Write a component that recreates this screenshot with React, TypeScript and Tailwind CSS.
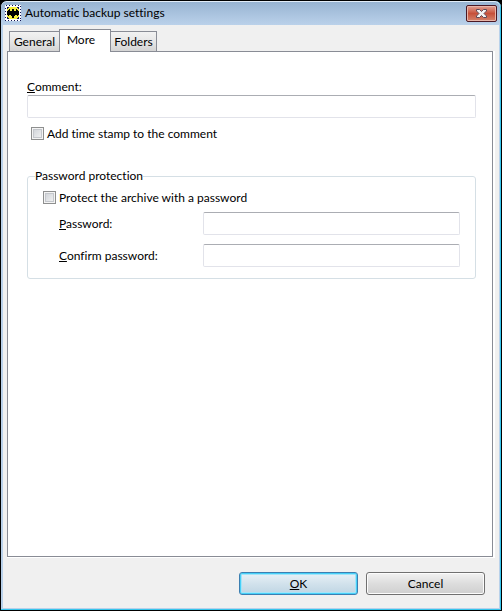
import React, { useState } from "react";

function BatIcon() {
  return (
    <svg width="16" height="16" viewBox="0 0 16 16" shapeRendering="crispEdges" aria-hidden="true">
      <rect width="16" height="16" fill="#fff" />
      <rect x="0.5" y="0.5" width="15" height="15" fill="none" stroke="#101050" strokeDasharray="1 2" />
      <rect x="2" y="2" width="12" height="12" fill="#15155c" />
      <path d="M4 2h8v1h1v1h1v8h-1v1h-1v1H4v-1H3v-1H2V4h1V3h1z" fill="#f4ee3c" />
      <path
        d="M2 6h1V5h1V4h1v2h2V4h2v2h2V4h1v1h1v1h1v4h-1v1h-1v-1h-2v1H9v2H7v-2H6v-1H4v1H3v-1H2z"
        fill="#000"
      />
    </svg>
  );
}

function CloseIcon() {
  return (
    <svg width="13" height="11" viewBox="0 0 13 11" aria-hidden="true">
      <path
        d="M1.500 1.500h3l2 2 2-2h3V3L9 5.500 11.500 8v1.500h-3l-2-2-2 2h-3V8L4 5.500 1.500 3z"
        fill="#f4f4f4"
        stroke="#5c4a58"
      />
    </svg>
  );
}

const inputClass =
  "h-[23px] min-w-0 rounded-[2px] border border-[#e2e3ea] border-t-[#abadb3] bg-white px-1 outline-none";

const tabClass =
  "h-5 border border-b-0 border-[#898c95] bg-linear-to-b from-[#f2f2f2] from-0% via-[#e6e6e6] via-50% to-[#d4d4d4]";

function CheckBox({ id, label }: { id: string; label: string }) {
  const [checked, setChecked] = useState(false);

  return (
    <div className="flex h-4 items-start gap-[3px]">
      <input
        id={id}
        type="checkbox"
        checked={checked}
        onChange={(e) => setChecked(e.target.checked)}
        className="mt-px size-[13px] shrink-0 appearance-none border border-[#8e8f8f] bg-linear-to-br from-[#cbcfd5] to-[#f6f6f6] shadow-[inset_0_0_0_1px_#f4f4f4,inset_0_0_0_2px_#c4c7cc] checked:from-[#3c5a8c] checked:to-[#3c5a8c]"
      />
      <label htmlFor={id}>{label}</label>
    </div>
  );
}

export default function App() {
  const [comment, setComment] = useState("");
  const [password, setPassword] = useState("");
  const [confirm, setConfirm] = useState("");

  return (
    <div className="min-h-screen bg-black font-['Lato','Open_Sans',sans-serif] text-[12px] leading-4 text-black [font-variant-ligatures:none]">
      <div className="flex min-h-screen flex-col overflow-hidden rounded-t-[7px] border border-black bg-[#b9d1ea]">
        <div className="flex grow flex-col rounded-t-[6px] border-r border-b border-[#35c5ec]">
          {/* Title bar */}
          <header className="flex h-6 items-start justify-between rounded-t-[6px] border-t border-[#e2edf8] bg-linear-to-b from-[#98b4d2] to-[#bad1ea] pr-[3px] pl-1">
            <div className="flex items-center gap-1 pt-[3px]">
              <BatIcon />
              <h1>Automatic backup settings</h1>
            </div>
            <button
              aria-label="Close"
              className="mt-[3px] flex h-[17px] w-[31px] items-center justify-center rounded-[2px] border border-[#4a1824] bg-linear-to-b from-[#e2a093] from-0% via-[#c6503a] via-50% to-[#d4836c] shadow-[inset_0_0_0_1px_#e8b5a9]"
            >
              <CloseIcon />
            </button>
          </header>

          <div className="mr-px mb-px ml-[2px] flex grow flex-col bg-[#f0f0f0] px-1 pt-1 pb-[13px]">
            {/* Tabs */}
            <div role="tablist" className="relative flex items-end pl-[2px]">
              <button role="tab" aria-selected="false" className={`${tabClass} w-[50px] border-r-0`}>
                General
              </button>
              <button
                role="tab"
                aria-selected="true"
                className="-mb-px h-[23px] w-[52px] border border-b-0 border-[#898c95] bg-white pr-2 pb-[2px]"
              >
                More
              </button>
              <button role="tab" aria-selected="false" className={`${tabClass} w-[46px] border-l-0`}>
                Folders
              </button>
            </div>

            {/* Tab page */}
            <div className="flex grow flex-col bg-white pr-[2px] pb-px">
              <main className="flex grow flex-col border border-[#898c95] pt-[27px] pr-4 pl-[19px]">
                <label htmlFor="comment">
                  <u>C</u>omment:
                </label>
                <input
                  id="comment"
                  type="text"
                  value={comment}
                  onChange={(e) => setComment(e.target.value)}
                  className={inputClass}
                />
                <div className="mt-2 pl-1">
                  <CheckBox id="stamp" label="Add time stamp to the comment" />
                </div>

                <fieldset className="mt-[26px] rounded-[3px] border border-[#d5dfe5] px-[15px] pb-[11px]">
                  <legend className="-ml-2 h-4">Password protection</legend>
                  <div className="pt-[6px]">
                    <CheckBox id="protect" label="Protect the archive with a password" />
                  </div>
                  <div className="mt-[6px] flex items-center pl-4">
                    <label htmlFor="password" className="w-36 shrink-0">
                      <u>P</u>assword:
                    </label>
                    <input
                      id="password"
                      type="password"
                      value={password}
                      onChange={(e) => setPassword(e.target.value)}
                      className={`${inputClass} grow`}
                    />
                  </div>
                  <div className="mt-[9px] flex items-center pl-4">
                    <label htmlFor="confirm" className="w-36 shrink-0">
                      <u>C</u>onfirm password:
                    </label>
                    <input
                      id="confirm"
                      type="password"
                      value={confirm}
                      onChange={(e) => setConfirm(e.target.value)}
                      className={`${inputClass} grow`}
                    />
                  </div>
                </fieldset>
              </main>
            </div>

            {/* Dialog buttons */}
            <footer className="mt-[14px] flex justify-end gap-2 pr-[10px]">
              <button className="h-[23px] w-[119px] rounded-[3px] border border-[#3c7fb1] bg-linear-to-b from-[#eaf2f7] from-0% via-[#d2e2ec] via-50% to-[#bfd5e3] shadow-[inset_0_0_0_1px_#46d0f8,inset_0_0_0_2px_#a5e4f8]">
                <u>O</u>K
              </button>
              <button className="h-[23px] w-[119px] rounded-[3px] border border-[#707070] bg-linear-to-b from-[#f2f2f2] from-0% via-[#dddddd] via-50% to-[#cfcfcf] shadow-[inset_0_0_0_1px_#fcfcfc]">
                Cancel
              </button>
            </footer>
          </div>
        </div>
      </div>
    </div>
  );
}
